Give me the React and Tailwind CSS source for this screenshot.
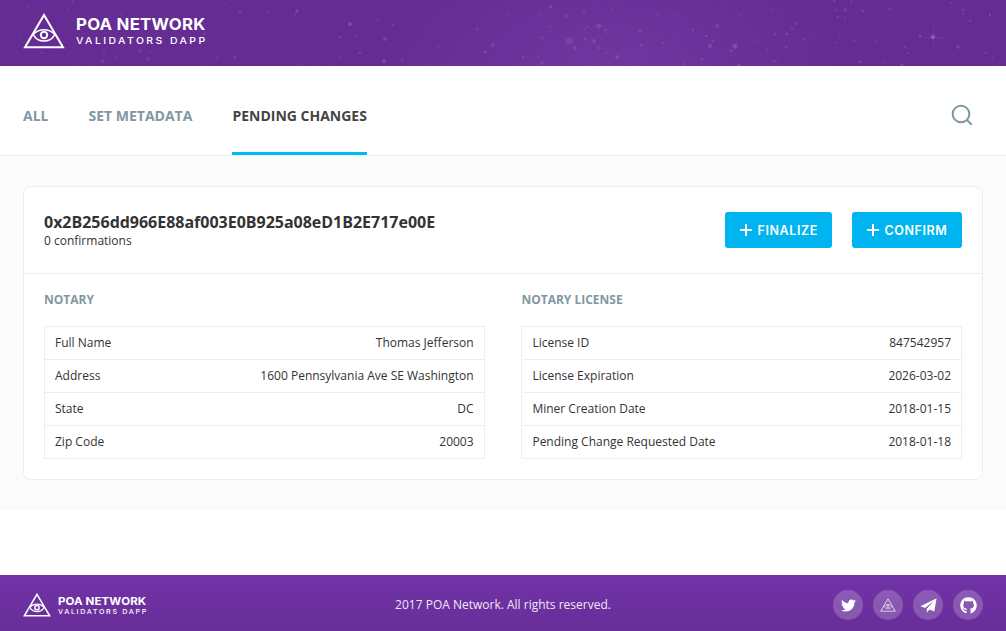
import React from "react";
import { FaTwitter, FaGithub } from "react-icons/fa";

// Star field of the header: [x, y, radius, opacity]
const STARS = [
  [254, 9, 1, 0.12], [268, 12, 1.2, 0.2], [297, 11, 1.8, 0.28], [295, 14, 1.2, 0.18], [293, 21, 1, 0.15],
  [350, 24, 1.9, 0.35], [340, 37, 1.4, 0.22], [385, 39, 2, 0.25], [384, 61, 2.2, 0.25], [360, 53, 1.6, 0.2],
  [402, 60, 2, 0.14], [393, 25, 1.3, 0.18], [378, 20, 1.2, 0.15], [387, 16, 1, 0.15], [435, 24, 1.2, 0.15],
  [438, 46, 1.3, 0.18], [477, 29, 1.4, 0.18], [493, 45, 2, 0.2], [485, 52, 1.8, 0.2], [498, 18, 1.2, 0.14],
  [509, 14, 1.2, 0.16], [539, 14, 1.2, 0.16], [551, 7, 1.8, 0.22], [567, 16, 2.2, 0.14], [584, 13, 1.8, 0.14],
  [550, 27, 1.2, 0.16], [569, 41, 4, 0.15], [599, 26, 3, 0.17], [587, 27, 1.3, 0.18], [584, 30, 1.3, 0.15],
  [605, 30, 1.4, 0.2], [608, 33, 1.3, 0.16], [585, 39, 1.6, 0.18], [594, 41, 2.1, 0.22], [575, 48, 1.9, 0.18],
  [542, 38, 1.6, 0.16], [599, 48, 1.6, 0.16], [617, 57, 2.1, 0.2], [542, 63, 2, 0.16], [523, 57, 1.5, 0.15],
  [538, 56, 1.4, 0.15], [606, 53, 1.3, 0.15], [611, 9, 1, 0.18], [356, 36, 1.1, 0.16], [340, 57, 1.1, 0.14],
  [640, 31, 2, 0.18], [641, 45, 1.6, 0.16], [658, 14, 1.2, 0.18], [677, 15, 1, 0.16], [717, 26, 2.2, 0.16],
  [693, 30, 1.4, 0.2], [706, 36, 1.3, 0.25], [713, 41, 1.5, 0.18], [710, 46, 2.1, 0.25], [735, 46, 3, 0.25],
  [731, 51, 1.5, 0.22], [739, 65, 2, 0.2], [702, 59, 1.3, 0.25], [684, 64, 1.3, 0.2], [653, 40, 1.2, 0.15],
  [663, 43, 1.1, 0.2], [741, 15, 1.2, 0.15], [796, 24, 1.3, 0.2], [792, 29, 1.5, 0.2], [787, 34, 1.7, 0.2],
  [775, 34, 1.4, 0.18], [786, 47, 1.5, 0.2], [758, 42, 1.2, 0.15], [804, 39, 1.4, 0.2], [810, 40, 1.3, 0.15],
  [774, 61, 1.5, 0.2], [776, 61, 1.2, 0.18], [771, 10, 1.4, 0.15], [834, 1, 1.4, 0.22], [851, 2, 1.4, 0.16],
  [836, 10, 1.6, 0.15], [845, 10, 2.2, 0.15], [863, 11, 1.6, 0.2], [838, 17, 1.4, 0.2], [845, 18, 1.3, 0.16],
  [885, 24, 1.2, 0.2], [890, 9, 2, 0.15], [854, 41, 1.1, 0.2], [840, 38, 1.4, 0.16], [835, 43, 1.3, 0.15],
  [876, 42, 1.1, 0.18], [860, 62, 1.6, 0.22], [883, 62, 1.3, 0.15], [905, 47, 1.4, 0.2], [908, 53, 1.3, 0.2],
  [902, 65, 1.8, 0.22], [920, 36, 1.7, 0.22], [933, 37, 2.4, 0.4], [958, 47, 1.9, 0.28], [944, 40, 1, 0.15],
  [963, 10, 1.5, 0.2], [963, 14, 1.1, 0.15], [970, 21, 1.2, 0.25], [990, 15, 1.1, 0.3], [951, 3, 1, 0.2],
  [941, 8, 1, 0.15], [986, 53, 1.1, 0.2], [993, 58, 1.2, 0.14], [828, 62, 1, 0.12], [767, 50, 1, 0.18],
  [28, 7, 1.6, 0.12], [73, 2, 1.6, 0.14], [68, 9, 1.1, 0.12], [87, 24, 1, 0.12], [19, 34, 1.4, 0.12],
  [42, 53, 1.6, 0.14], [104, 53, 1.5, 0.16], [103, 61, 1.9, 0.16], [115, 57, 1.3, 0.14], [140, 51, 2.2, 0.14],
  [148, 59, 2.2, 0.14], [150, 52, 1.1, 0.14], [204, 34, 1.6, 0.14], [240, 12, 1.4, 0.2], [235, 57, 2, 0.15],
  [217, 58, 1.4, 0.13], [191, 14, 1.1, 0.12], [121, 14, 1.2, 0.12], [225, 4, 1, 0.12],
];

// Faint dust between the larger stars
const DUST = Array.from({ length: 330 }, (_, i) => [
  (i * 379.37) % 1006,
  (i * 41.93 + (i % 7) * 5.3) % 66,
  0.5 + (i % 4) * 0.18,
  0.04 + (i % 5) * 0.013,
]);

function Starfield() {
  return (
    <svg className="absolute inset-0 h-full w-full" viewBox="0 0 1006 66" preserveAspectRatio="none" aria-hidden="true">
      <defs>
        <radialGradient id="star">
          <stop offset="0" stopColor="#d3a4f2" />
          <stop offset="0.45" stopColor="#d3a4f2" stopOpacity="0.75" />
          <stop offset="1" stopColor="#d3a4f2" stopOpacity="0" />
        </radialGradient>
      </defs>
      {DUST.map(([x, y, r, o], i) => (
        <circle key={"d" + i} cx={x} cy={y} r={r} fill="#d3a4f2" opacity={o} />
      ))}
      {STARS.map(([x, y, r, o], i) => (
        <circle key={i} cx={x} cy={y} r={r * 1.25} fill="url(#star)" opacity={o} />
      ))}
      <path d="M933.500 27v20M924 37.500h19" stroke="#d3a4f2" strokeWidth="0.8" opacity="0.14" />
    </svg>
  );
}

function Emblem({ className, stroke = 2 }) {
  return (
    <svg className={className} viewBox="0 0 42 36" fill="none" stroke="currentColor" strokeWidth={stroke} aria-hidden="true">
      <path d="M21 2 40 34.200H2Z" />
      <path d="M10.200 21.300C13 18.500 16.700 16.700 21 16.700s8 1.800 10.800 4.600C29.500 25.900 25.700 28 21 28s-8.500-2.100-10.800-6.700Z" strokeWidth={stroke * 0.8} />
      <circle cx="21" cy="22" r="3.200" strokeWidth={stroke} />
    </svg>
  );
}

function Plus() {
  return (
    <svg className="h-3 w-3" viewBox="0 0 12 12" stroke="currentColor" strokeWidth="2" aria-hidden="true">
      <path d="M6 0v12M0 6h12" />
    </svg>
  );
}

function ActionButton({ className, children }) {
  return (
    <button className={`flex h-9 items-center gap-[5.500px] rounded-[3px] bg-[#00b4f0] pl-[15px] font-[Inter,sans-serif] text-[12.500px] font-semibold tracking-[0.6px] text-white ${className}`}>
      <Plus />
      <span className="pt-[2px]">{children}</span>
    </button>
  );
}

function InfoTable({ title, rows }) {
  return (
    <section className="w-[440.600px]">
      <h2 className="text-[12px] leading-[18px] font-bold text-[#8197a2]">{title}</h2>
      <dl className="mt-[17px] border border-b-0 border-[#eee]">
        {rows.map(([label, value]) => (
          <div key={label} className="flex h-[33px] items-center justify-between border-b border-[#eee] px-[10px] text-[12px] leading-[18px]">
            <dt>{label}</dt>
            <dd>{value}</dd>
          </div>
        ))}
      </dl>
    </section>
  );
}

function Social({ children }) {
  return <a className="flex h-[30px] w-[30px] items-center justify-center rounded-full bg-white/20">{children}</a>;
}

export default function App() {
  return (
    <div className="flex h-[631px] w-full flex-col bg-white font-['Open_Sans',sans-serif] text-[#333]">
      <header className="relative flex h-[66px] shrink-0 overflow-hidden bg-[#652c94] bg-[radial-gradient(ellipse_230px_120px_at_610px_66px,#7137a1,#652c94)] text-white">
        <Starfield />
        <div className="relative flex pt-[13px] pl-[23px]">
          <Emblem className="h-9 w-[42px]" />
          <div className="ml-[11px] font-[Inter,sans-serif] whitespace-nowrap">
            <div className="mt-[3px] origin-left scale-x-105 text-[16px] leading-[16px] font-bold tracking-[0.230px]">POA NETWORK</div>
            <div className="mt-[4px] origin-left scale-x-110 text-[9.500px] leading-[10px] font-medium tracking-[2.200px]">VALIDATORS DAPP</div>
          </div>
        </div>
      </header>

      <nav className="flex h-[90px] shrink-0 justify-between border-b border-[#eee] pr-[33px] pl-[23px]">
        <div className="flex gap-10 text-[14px] leading-[20px] font-bold text-[#8197a2]">
          <a className="pt-[40px]">ALL</a>
          <a className="pt-[40px]">SET METADATA</a>
          <a className="border-b-[3px] border-[#00b9f2] pt-[40px] text-[#444]">PENDING CHANGES</a>
        </div>
        <svg className="mt-[38px] h-[22px] w-[22px]" viewBox="0 0 22 22" fill="none" stroke="#7f98a5" strokeWidth="2" aria-hidden="true">
          <circle cx="10" cy="10" r="8.300" />
          <path d="m15.700 15.700 5 5" />
        </svg>
      </nav>

      <main className="h-[354px] shrink-0 bg-[#fbfbfb] px-[23px] pt-[30px]">
        <article className="h-[294px] rounded-lg border border-[#eee] bg-white">
          <div className="flex h-[87px] justify-between border-b border-[#eee] pr-5 pl-5">
            <div className="pt-[25px]">
              <h1 className="text-[16px] leading-[20px] font-bold tracking-[-0.015px]">0x2B256dd966E88af003E0B925a08eD1B2E717e00E</h1>
              <p className="text-[12px] leading-[18px]">0 confirmations</p>
            </div>
            <div className="flex gap-5 pt-[25px]">
              <ActionButton className="w-[107px]">FINALIZE</ActionButton>
              <ActionButton className="w-[110px]">CONFIRM</ActionButton>
            </div>
          </div>
          <div className="flex justify-between px-5 pt-[17px]">
            <InfoTable
              title="NOTARY"
              rows={[
                ["Full Name", "Thomas Jefferson"],
                ["Address", "1600 Pennsylvania Ave SE Washington"],
                ["State", "DC"],
                ["Zip Code", "20003"],
              ]}
            />
            <InfoTable
              title="NOTARY LICENSE"
              rows={[
                ["License ID", "847542957"],
                ["License Expiration", "2026-03-02"],
                ["Miner Creation Date", "2018-01-15"],
                ["Pending Change Requested Date", "2018-01-18"],
              ]}
            />
          </div>
        </article>
      </main>

      <footer className="mt-auto grid h-14 shrink-0 grid-cols-3 bg-linear-to-b from-[#7133a8] to-[#682e98] px-[23px] text-white">
        <div className="flex pt-[18px]">
          <Emblem className="h-6 w-7" stroke={2.3} />
          <div className="ml-[7px] font-[Inter,sans-serif] whitespace-nowrap">
            <div className="mt-[3px] origin-left scale-x-105 text-[11px] leading-[11px] font-bold tracking-[0.080px]">POA NETWORK</div>
            <div className="mt-[2px] origin-left scale-x-110 text-[6.500px] leading-[7px] font-medium tracking-[1.500px]">VALIDATORS DAPP</div>
          </div>
        </div>
        <p className="self-center pt-[3px] text-center text-[12px] leading-[18px] text-[#f0e8f6]">2017 POA Network. All rights reserved.</p>
        <div className="flex items-start justify-end gap-[10px] pt-[15px]">
          <Social><FaTwitter size={15} /></Social>
          <Social><Emblem className="h-[14px] w-4 opacity-85" stroke={2.3} /></Social>
          <Social>
            <svg className="h-[15px] w-[17px]" viewBox="0 0 17 15" fill="currentColor" aria-hidden="true">
              <path d="M16.600.2 14.300 13.600 9.600 11.600 6.800 14.600V10.700L14 2.600 5.100 10 .4 8.200Z" />
            </svg>
          </Social>
          <Social><FaGithub size={17} /></Social>
        </div>
      </footer>
    </div>
  );
}
